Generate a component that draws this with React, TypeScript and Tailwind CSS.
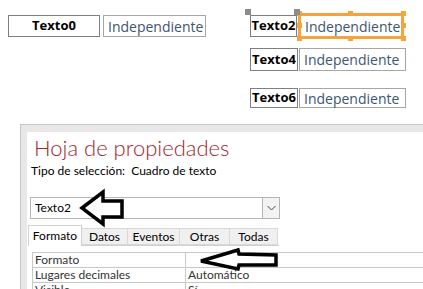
import React from 'react';

const ui = { fontFamily: 'Lato, "Open Sans", sans-serif' };
const sans = { fontFamily: '"Open Sans", "Noto Sans", sans-serif' };

type Ctl = { label: string; labelW: number; valueW: number; h: number; gap: number };

const Control = ({ label, labelW, valueW, h, gap }: Ctl) => (
  <div className="flex" style={{ height: h, columnGap: gap }}>
    <div
      className="flex items-center justify-center border border-[#7f7f7f] bg-white text-[13px] font-bold text-black"
      style={{ width: labelW, ...sans }}
    >
      {label}
    </div>
    <div
      className="flex items-center pl-[4px] border border-[#a6a6a6] bg-white text-[14px] text-[#405570]"
      style={{ width: valueW, ...sans }}
    >
      Independiente
    </div>
  </div>
);

const Handle = ({ className }: { className: string }) => (
  <span className={`absolute w-[5px] h-[5px] bg-[#f7a33b] ${className}`} />
);

const App: React.FC = () => {
  const tabs = ['Formato', 'Datos', 'Eventos', 'Otras', 'Todas'];
  const widths = [54, 46, 52, 50, 48];
  const rows = [
    ['Formato', ''],
    ['Lugares decimales', 'Automático'],
    ['Visible', 'Sí'],
  ];

  return (
    <div className="relative flex flex-col w-[423px] h-[289px] overflow-hidden bg-white" style={ui}>
      {/* form design canvas */}
      <div className="relative flex h-[124px] shrink-0">
        <div className="pl-[8px] pt-[15px]">
          <Control label="Texto0" labelW={92} valueW={103} h={22} gap={3} />
        </div>
        <div className="flex flex-col ml-[44px] pt-[15px]">
          <Control label="Texto2" labelW={47} valueW={103} h={22} gap={3} />
          <div className="mt-[11px]">
            <Control label="Texto4" labelW={48} valueW={107} h={23} gap={1} />
          </div>
          <div className="mt-[17px]">
            <Control label="Texto6" labelW={48} valueW={107} h={20} gap={1} />
          </div>
        </div>

        {/* selection of the Independiente box next to Texto2 */}
        <div className="absolute left-[298px] top-[13px] w-[106px] h-[26px] border-[3px] border-[#f7a33b]" />
        <Handle className="left-[297px] top-[11px]" />
        <Handle className="left-[348px] top-[11px]" />
        <Handle className="left-[401px] top-[11px]" />
        <Handle className="left-[297px] top-[23px]" />
        <Handle className="left-[401px] top-[23px]" />
        <Handle className="left-[297px] top-[36px]" />
        <Handle className="left-[348px] top-[36px]" />
        <Handle className="left-[401px] top-[36px]" />
        <span className="absolute left-[245px] top-[9px] w-[6px] h-[6px] bg-[#8c8c8c]" />
        <span className="absolute left-[294px] top-[9px] w-[6px] h-[6px] bg-[#8c8c8c]" />
      </div>

      {/* property sheet */}
      <div className="flex-1 ml-[20px] border-l border-t border-[#c6c6c6] bg-[#e8e8e8] pl-[6px] pt-[7px]">
        <div className="h-full bg-white pl-[1px]">
          <div className="pl-[6px] pt-[2px] text-[22px] font-light leading-[27px] text-[#a4262c]">
            Hoja de propiedades
          </div>
          <div className="pl-[3px] mt-[2px] text-[12px] leading-[16px] text-black">
            Tipo de selección:&nbsp;&nbsp;Cuadro de texto
          </div>
          <div className="ml-[2px] mt-[18px] w-[250px] h-[22px] flex items-center border border-[#b4b4b4] bg-white">
            <span className="flex-1 pl-[4px] text-[12px] text-black">Texto2</span>
            <span className="flex items-center justify-center w-[17px] h-[20px] border-l border-[#b4b4b4] bg-[#f3f3f3]">
              <svg width="9" height="6" viewBox="0 0 9 6">
                <path d="M0.5 1 L4.5 5 L8.5 1" fill="none" stroke="#444" strokeWidth="1" />
              </svg>
            </span>
          </div>
          <div className="flex items-end mt-[6px] h-[21px] w-[251px] border-b border-[#d0d0d0]">
            {tabs.map((t, i) => (
              <div
                key={t}
                className={
                  i === 0
                    ? 'flex items-center justify-center h-[21px] -mb-px border border-b-0 border-[#d0d0d0] bg-white text-[12px] text-black'
                    : 'flex items-center justify-center h-[17px] border border-l-0 border-[#d8d8d8] bg-[#f0f0f0] text-[12px] text-black'
                }
                style={{ width: widths[i] }}
              >
                {t}
              </div>
            ))}
          </div>
          <div className="ml-[4px] mt-[6px] border-t border-l border-[#c8c8c8] text-[12px] text-[#333]">
            {rows.map(([k, v]) => (
              <div key={k} className="flex h-[15px] border-b border-[#c8c8c8] leading-[14px]">
                <div className="w-[153px] pl-[2px] border-r border-[#c8c8c8]">{k}</div>
                <div className="flex-1 pl-[2px]">{v}</div>
              </div>
            ))}
          </div>
        </div>
      </div>

      {/* annotation arrows drawn over the screenshot */}
      <svg className="absolute left-0 top-0 pointer-events-none" width="423" height="289" viewBox="0 0 423 289">
        <polygon
          points="82,208 103,192 103,201 122,201 122,217 103,217 103,224"
          fill="white"
          stroke="black"
          strokeWidth="3.5"
        />
        <polygon
          points="201,261 238,250 239,254 276,255 276,265 239,265 238,269"
          fill="white"
          stroke="black"
          strokeWidth="3.5"
        />
      </svg>
    </div>
  );
};

export default App;
